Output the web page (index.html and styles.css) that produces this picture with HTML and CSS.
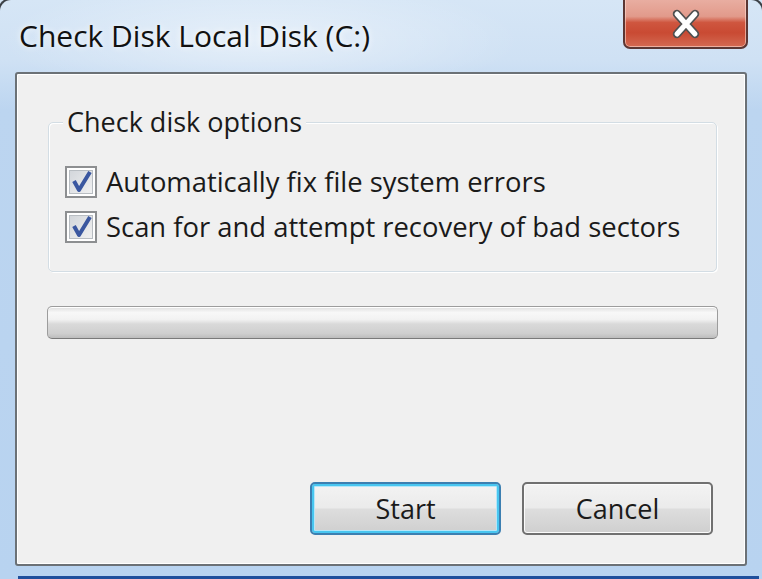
FILE: index.html
```html
<!DOCTYPE html>
<html>
<head>
<meta charset="utf-8">
<link rel="stylesheet" href="styles.css">
</head>
<body>
<div class="window">
  <div class="titlebar">
    <div class="title">Check Disk Local Disk (C:)</div>
    <div class="close">
      <svg width="36" height="30" viewBox="0 0 36 30">
        <path d="M9 5 L27 25 M27 5 L9 25" stroke="#505050" stroke-width="8.5" stroke-linecap="round"/>
        <path d="M9 5 L27 25 M27 5 L9 25" stroke="#ffffff" stroke-width="5" stroke-linecap="round"/>
      </svg>
    </div>
  </div>
  <div class="client">
    <fieldset class="group">
      <legend class="legend">Check disk options</legend>
      <label class="option">
        <span class="box">
          <svg width="32" height="32" viewBox="0 0 32 32"><path d="M9 15 L14 24 L25 6" fill="none" stroke="#3a57a0" stroke-width="4" stroke-linejoin="round"/></svg>
        </span>
        <span class="label">Automatically fix file system errors</span>
      </label>
      <label class="option">
        <span class="box">
          <svg width="32" height="32" viewBox="0 0 32 32"><path d="M9 15 L14 24 L25 6" fill="none" stroke="#3a57a0" stroke-width="4" stroke-linejoin="round"/></svg>
        </span>
        <span class="label">Scan for and attempt recovery of bad sectors</span>
      </label>
    </fieldset>
    <div class="progress"></div>
    <div class="buttons">
      <button class="btn btn-default">Start</button>
      <button class="btn">Cancel</button>
    </div>
  </div>
  <div class="taskbar"></div>
</div>
</body>
</html>
```
FILE: styles.css
```css
html, body {
  margin: 0;
  padding: 0;
}
body {
  width: 762px;
  height: 579px;
  overflow: hidden;
  font-family: "Open Sans", "Noto Sans", sans-serif;
  color: #1a1a1a;
}
.window {
  position: relative;
  height: 579px;
  display: flex;
  flex-direction: column;
  background: linear-gradient(180deg, #d6e6f6 0px, #cfe1f4 60px, #bcd5f0 110px, #b8d3f0 100%);
}
.window::before {
  content: "";
  position: absolute;
  left: -2px;
  top: -2px;
  width: 30px;
  height: 30px;
  border-left: 2px solid #3a3f44;
  border-top: 2px solid #3a3f44;
  border-top-left-radius: 13px;
}
.window::after {
  content: "";
  position: absolute;
  right: -2px;
  top: -2px;
  width: 30px;
  height: 30px;
  border-right: 2px solid #3a3f44;
  border-top: 2px solid #3a3f44;
  border-top-right-radius: 13px;
}
.titlebar {
  height: 72px;
  display: flex;
  justify-content: space-between;
  align-items: flex-start;
  background: radial-gradient(ellipse 260px 60px at 260px 40px, rgba(255,255,255,0.45), rgba(255,255,255,0));
}
.title {
  padding: 17px 0 0 19px;
  font-size: 30px;
  line-height: 38px;
  font-weight: 500;
  color: #111;
  text-shadow: 0 0 6px rgba(255,255,255,0.9);
}
.close {
  width: 121px;
  height: 47px;
  margin-right: 14px;
  margin-top: -4px;
  border: 2px solid #5b3633;
  border-top: none;
  border-radius: 0 0 7px 7px;
  background: linear-gradient(180deg, #eab2a6 0%, #e29a8b 40%, #cf563f 52%, #c94a33 72%, #d36a52 100%);
  box-shadow: inset 0 0 0 1px rgba(255,220,210,0.6);
  display: flex;
  align-items: center;
  justify-content: center;
  padding-top: 4px;
  box-sizing: content-box;
}
.client {
  margin: 0 15px 0 15px;
  height: 490px;
  border: 2px solid #6b7176;
  border-radius: 3px;
  background: #f0f0f0;
  box-shadow: inset 1px 1px 0 #ffffff, inset -1px -1px 0 #ffffff;
  display: flex;
  flex-direction: column;
}
.group {
  margin: 31px 28px 0 31px;
  padding: 20px 14px 0 14px;
  height: 167px;
  box-sizing: border-box;
  border: 1px solid #d3dde4;
  border-radius: 5px;
  box-shadow: inset 1px 1px 0 #ffffff, 1px 1px 0 #ffffff;
}
.legend {
  padding: 0 4px;
  font-size: 27px;
  line-height: 34px;
  font-weight: 500;
  background: #f0f0f0;
}
.option {
  display: flex;
  align-items: center;
  gap: 9px;
  height: 45px;
  margin-left: 2px;
}
.box {
  width: 28px;
  height: 28px;
  border: 2px solid #8d8f91;
  background: linear-gradient(135deg, #cfd3d8, #f4f4f4);
  box-shadow: inset 0 0 0 2px #ffffff, inset 0 0 0 3px #b8bdc2;
  position: relative;
  flex: none;
}
.box svg {
  position: absolute;
  left: -2px;
  top: -2px;
}
.label {
  font-size: 27.4px;
  line-height: 34px;
  font-weight: 500;
}
.progress {
  margin: 34px 27px 0 30px;
  height: 31px;
  border: 1px solid #9c9c9c;
  border-bottom-color: #7a7a7a;
  border-radius: 5px;
  background: linear-gradient(180deg, #dedede 0%, #f8f8f8 18%, #f2f2f2 40%, #d9d9d9 55%, #cfcfcf 85%, #bdbdbd 100%);
  box-shadow: inset 0 1px 0 #ffffff;
}
.buttons {
  margin: auto 32px 29px 0;
  display: flex;
  justify-content: flex-end;
  gap: 21px;
}
.btn {
  width: 191px;
  height: 53px;
  border: 2px solid #707070;
  border-radius: 5px;
  background: linear-gradient(180deg, #f3f3f3 0%, #ebebeb 48%, #dddddd 52%, #cfcfcf 100%);
  box-shadow: inset 0 0 0 1px #fbfbfb;
  font-family: "Open Sans", "Noto Sans", sans-serif;
  font-size: 27px;
  font-weight: 500;
  color: #1a1a1a;
  padding: 0;
}
.btn-default {
  border-color: #3c7fb1;
  box-shadow: inset 0 0 0 2px #48c6f0, inset 0 0 0 3px #b6e6f8;
}
.taskbar {
  margin: auto 3px 0 18px;
  height: 3px;
  background: #1f4f9c;
}
```
